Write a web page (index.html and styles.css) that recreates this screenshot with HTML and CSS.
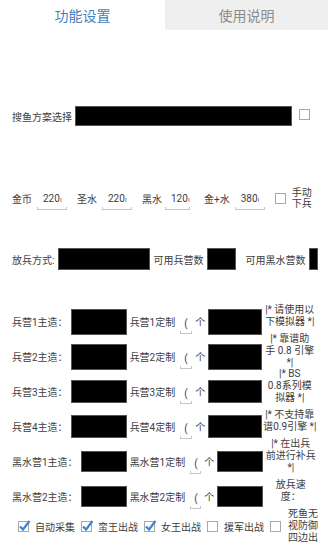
FILE: index.html
```html
<!DOCTYPE html>
<html lang="zh">

<head>
    <meta charset="UTF-8">
    <meta name="viewport" content="width=device-width, initial-scale=1.0">
    <title>功能设置</title>
    <link rel="stylesheet" href="styles.css">
</head>

<body>
    <div id="app">
        <div class="tabs">
            <div class="tab tab-on">功能设置</div>
            <div class="tab tab-off">使用说明</div>
        </div>

        <div class="panel">
            <!-- 方案 -->
            <div class="row row-scheme">
                <span>搜鱼方案选择</span>
                <div class="spin spin-scheme"></div>
                <span class="cb cb-scheme"><svg width="13" height="13" viewBox="0 0 13 13"><rect x="1.5" y="1.5" width="10" height="10" fill="#fff" stroke="#a8a8a8"/></svg></span>
            </div>

            <!-- 资源 -->
            <div class="row row-res">
                <span>金币</span>
                <div class="field f-res"><span class="val">220<i>ı</i></span><span class="line"></span></div>
                <span class="gap10">圣水</span>
                <div class="field f-res"><span class="val">220<i>ı</i></span><span class="line"></span></div>
                <span class="gap10">黑水</span>
                <div class="field f-res f-short"><span class="val">120<i>ı</i></span><span class="line"></span></div>
                <span class="gap14">金+水</span>
                <div class="field f-res"><span class="val">380<i>ı</i></span><span class="line"></span></div>
                <span class="cb cb-manual"><svg width="13" height="13" viewBox="0 0 13 13"><rect x="1.5" y="1.5" width="10" height="10" fill="#fff" stroke="#a8a8a8"/></svg></span>
                <span class="two">手动<br>下兵</span>
            </div>

            <!-- 放兵方式 -->
            <div class="row row-mode">
                <span>放兵方式:</span>
                <div class="spin spin-mode"></div>
                <span class="m3">可用兵营数</span>
                <div class="spin spin-num"></div>
                <span class="m9">可用黑水营数</span>
                <div class="spin spin-dark"></div>
            </div>

            <!-- 兵营 -->
            <div class="camps">
                <div class="row row-camp">
                    <span class="c-lbl">兵营1主造：</span>
                    <div class="spin box-main h26"></div>
                    <span class="m3">兵营1定制</span>
                    <div class="field f-num"><span class="val">(</span><span class="line"></span></div>
                    <span class="m3">个</span>
                    <div class="spin box-cus h26"></div>
                    <div class="note">|* 请使用以<br>下模拟器 *|</div>
                </div>
                <div class="row row-camp">
                    <span class="c-lbl">兵营2主造：</span>
                    <div class="spin box-main h26"></div>
                    <span class="m3">兵营2定制</span>
                    <div class="field f-num"><span class="val">(</span><span class="line"></span></div>
                    <span class="m3">个</span>
                    <div class="spin box-cus h26"></div>
                    <div class="note">|* 靠谱助<br>手 0.8 引擎<br>*|</div>
                </div>
                <div class="row row-camp">
                    <span class="c-lbl">兵营3主造：</span>
                    <div class="spin box-main h23"></div>
                    <span class="m3">兵营3定制</span>
                    <div class="field f-num"><span class="val">(</span><span class="line"></span></div>
                    <span class="m3">个</span>
                    <div class="spin box-cus h23"></div>
                    <div class="note">|* BS<br>0.8系列模<br>拟器 *|</div>
                </div>
                <div class="row row-camp">
                    <span class="c-lbl">兵营4主造：</span>
                    <div class="spin box-main h23"></div>
                    <span class="m3">兵营4定制</span>
                    <div class="field f-num"><span class="val">(</span><span class="line"></span></div>
                    <span class="m3">个</span>
                    <div class="spin box-cus h23"></div>
                    <div class="note">|* 不支持靠<br>谱0.9引擎 *|</div>
                </div>
                <div class="row row-camp">
                    <span class="c-lbl">黑水营1主造：</span>
                    <div class="spin box-dark h21"></div>
                    <span class="m3">黑水营1定制</span>
                    <div class="field f-num f-dark"><span class="val">(</span><span class="line"></span></div>
                    <span class="m3">个</span>
                    <div class="spin box-dark h21"></div>
                    <div class="note">|* 在出兵<br>前进行补兵<br>*|</div>
                </div>
                <div class="row row-camp">
                    <span class="c-lbl">黑水营2主造：</span>
                    <div class="spin box-dark h21"></div>
                    <span class="m3">黑水营2定制</span>
                    <div class="field f-num f-dark"><span class="val">(</span><span class="line"></span></div>
                    <span class="m3">个</span>
                    <div class="spin box-dark h21"></div>
                    <div class="note">放兵速<br>度：</div>
                </div>
            </div>

            <!-- 出战 -->
            <div class="row row-opts">
                <span class="cb"><svg width="14" height="14" viewBox="0 0 14 14"><rect x="1.5" y="2.5" width="10" height="10" fill="#fff" stroke="#a8a8a8"/><path d="M3 7.5 L6 10.5 L12.5 2" fill="none" stroke="#3a86d4" stroke-width="2.2"/></svg></span>
                <span class="opt">自动采集</span>
                <span class="cb"><svg width="14" height="14" viewBox="0 0 14 14"><rect x="1.5" y="2.5" width="10" height="10" fill="#fff" stroke="#a8a8a8"/><path d="M3 7.5 L6 10.5 L12.5 2" fill="none" stroke="#3a86d4" stroke-width="2.2"/></svg></span>
                <span class="opt">蛮王出战</span>
                <span class="cb"><svg width="14" height="14" viewBox="0 0 14 14"><rect x="1.5" y="2.5" width="10" height="10" fill="#fff" stroke="#a8a8a8"/><path d="M3 7.5 L6 10.5 L12.5 2" fill="none" stroke="#3a86d4" stroke-width="2.2"/></svg></span>
                <span class="opt">女王出战</span>
                <span class="cb"><svg width="14" height="14" viewBox="0 0 14 14"><rect x="1.5" y="2.5" width="10" height="10" fill="#fff" stroke="#a8a8a8"/></svg></span>
                <span class="opt">援军出战</span>
                <span class="cb"><svg width="14" height="14" viewBox="0 0 14 14"><rect x="1.5" y="2.5" width="10" height="10" fill="#fff" stroke="#a8a8a8"/></svg></span>
                <span class="three">死鱼无<br>视防御<br>四边出</span>
            </div>
        </div>
    </div>
</body>

</html>
```

FILE: styles.css
```css
/* reset start */
* {
    padding: 0;
    margin: 0;
    box-sizing: border-box;
}

html,
body,
#app {
    width: 100%;
    height: 100%;
    overflow: hidden;
}

body {
    background: #fff;
    color: #3d3d3d;
    font-family: Roboto, "Noto Sans CJK SC", sans-serif;
    font-size: 10px;
}

i {
    font-style: normal;
}

/* reset end */


/* tabs start */
.tabs {
    display: flex;
    height: 30px;
}

.tab {
    display: flex;
    align-items: center;
    justify-content: center;
    font-size: 14px;
}

.tab-on {
    width: 165px;
    color: #3f7fc1;
}

.tab-off {
    flex: 1;
    background: #efefef;
    color: #8c8c8c;
}

/* tabs end */


/* structure start */
.panel {
    padding-left: 12px;
}

.row {
    display: flex;
    align-items: center;
    white-space: nowrap;
}

.spin {
    background: #000;
    border: 1px solid #555;
    flex: none;
}

.cb {
    display: flex;
    flex: none;
}

.m3 {
    margin-left: 3px;
}

.m9 {
    margin-left: 9px;
}

.gap10 {
    margin-left: 10px;
}

.gap14 {
    margin-left: 14px;
}

/* 方案 */
.row-scheme {
    margin-top: 76px;
    height: 20px;
}

.spin-scheme {
    width: 217px;
    height: 20px;
    margin-left: 3px;
}

.cb-scheme {
    margin-left: 6px;
    margin-bottom: 4px;
}

/* 资源 */
.row-res {
    margin-top: 60px;
    height: 24px;
}

.field {
    display: flex;
    flex-direction: column;
    flex: none;
    margin-left: 5px;
}

.field .val {
    line-height: 14px;
    padding-left: 6px;
}

.field .val i {
    font-size: 7px;
    color: #666;
}

.field .line {
    height: 3px;
    border: 1px solid #c4c4c4;
    border-top: none;
}

.f-res {
    width: 30px;
    margin-top: 6px;
}

.f-short {
    width: 25px;
    margin-left: 3px;
}

.cb-manual {
    margin-left: 9px;
}

.two {
    margin-left: 5px;
    line-height: 11px;
}

/* 放兵方式 */
.row-mode {
    margin-top: 38px;
    height: 22px;
}

.spin-mode {
    width: 92px;
    height: 22px;
    margin-left: 4px;
}

.spin-num {
    width: 29px;
    height: 22px;
    margin-left: 4px;
}

.spin-dark {
    width: 9px;
    height: 22px;
    margin-left: 4px;
}

/* 兵营 */
.camps {
    margin-top: 34px;
}

.row-camp {
    height: 35px;
}

.c-lbl {
    margin-right: 3px;
}

.box-main {
    width: 56px;
}

.box-cus {
    width: 54px;
    margin-left: 3px;
}

.box-dark {
    width: 46px;
    margin-left: 3px;
}

.c-lbl + .box-dark {
    margin-left: 0;
}

.h26 {
    height: 26px;
}

.h23 {
    height: 23px;
}

.h21 {
    height: 21px;
}

.f-num {
    width: 12px;
    margin-top: 8px;
}

.f-num .val {
    padding-left: 4px;
}

.f-dark {
    width: 11px;
}

.note {
    width: 53px;
    margin-left: 1px;
    margin-bottom: 12px;
    line-height: 12px;
    text-align: center;
    white-space: nowrap;
}

/* 出战 */
.row-opts {
    margin-top: -6px;
    height: 36px;
    padding-left: 5px;
}

.opt {
    margin-left: 4px;
    margin-right: 5px;
}

.three {
    margin-left: 5px;
    line-height: 12px;
}

/* structure end */
```
